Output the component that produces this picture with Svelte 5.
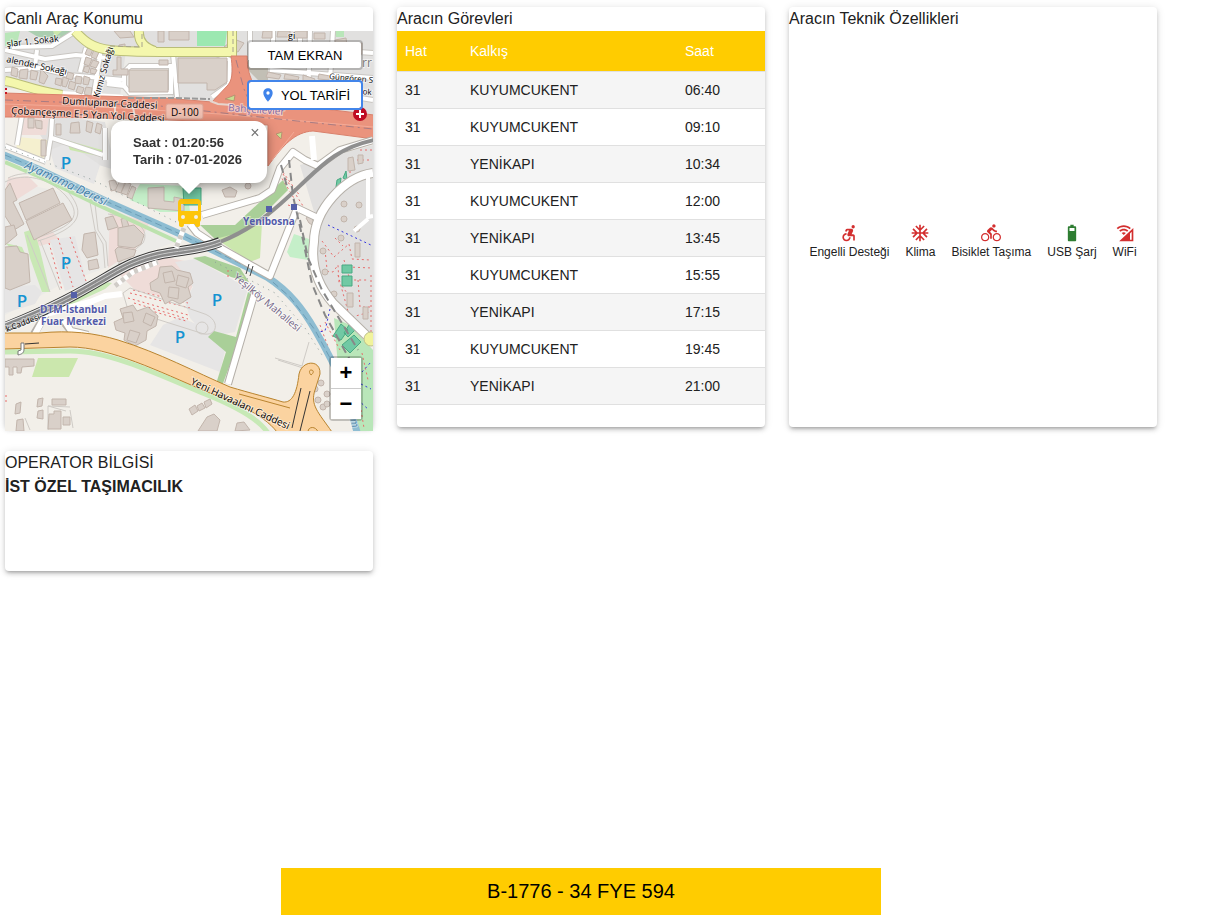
<script>
  let trips = [
    { line: "31", from: "KUYUMCUKENT", time: "06:40" },
    { line: "31", from: "KUYUMCUKENT", time: "09:10" },
    { line: "31", from: "YENİKAPI", time: "10:34" },
    { line: "31", from: "KUYUMCUKENT", time: "12:00" },
    { line: "31", from: "YENİKAPI", time: "13:45" },
    { line: "31", from: "KUYUMCUKENT", time: "15:55" },
    { line: "31", from: "YENİKAPI", time: "17:15" },
    { line: "31", from: "KUYUMCUKENT", time: "19:45" },
    { line: "31", from: "YENİKAPI", time: "21:00" },
  ];

  let features = [
    {
      label: "Engelli Desteği",
      active: false,
      path: "M17 2.54a2 2 0 1 1 0 4 2 2 0 0 1 0-4zM14 17h-2c0 1.65-1.35 3-3 3s-3-1.35-3-3 1.35-3 3-3v-2c-2.76 0-5 2.24-5 5s2.24 5 5 5 5-2.24 5-5zm3-3.5h-1.86l1.67-3.67C17.42 8.5 16.44 7 14.96 7h-5.2c-.81 0-1.54.47-1.87 1.2L7.22 10l1.92.53L9.79 9H12l-1.83 4.1c-.6 1.33.39 2.9 1.85 2.9H17v5h2v-5.5c0-1.1-.9-2-2-2z",
    },
    {
      label: "Klima",
      active: false,
      path: "M22 11h-4.17l3.24-3.24-1.41-1.42L15 11h-2V9l4.66-4.66-1.42-1.41L13 6.17V2h-2v4.17L7.76 2.93 6.34 4.34 11 9v2H9L4.34 6.34 2.93 7.76 6.17 11H2v2h4.17l-3.24 3.24 1.41 1.42L9 13h2v2l-4.66 4.66 1.42 1.41L11 17.83V22h2v-4.17l3.24 3.24 1.42-1.41L13 15v-2h2l4.66 4.66 1.41-1.42L17.83 13H22z",
    },
    {
      label: "Bisiklet Taşıma",
      active: false,
      path: "M15.5 5.5c1.1 0 2-.9 2-2s-.9-2-2-2-2 .9-2 2 .9 2 2 2zM5 12c-2.8 0-5 2.2-5 5s2.2 5 5 5 5-2.2 5-5-2.2-5-5-5zm0 8.5c-1.9 0-3.5-1.6-3.5-3.5s1.6-3.5 3.5-3.5 3.5 1.6 3.5 3.5-1.6 3.5-3.5 3.5zm5.8-10l2.4-2.4.8.8c1.3 1.3 3 2.1 5.1 2.1V9c-1.5 0-2.7-.6-3.6-1.5l-1.9-1.9c-.5-.4-1-.6-1.6-.6s-1.1.2-1.4.6L7.8 8.4c-.4.4-.6.9-.6 1.4 0 .6.2 1.1.6 1.4L11 14v5h2v-6.2l-2.2-2.3zM19 12c-2.8 0-5 2.2-5 5s2.2 5 5 5 5-2.2 5-5-2.2-5-5-5zm0 8.5c-1.9 0-3.5-1.6-3.5-3.5s1.6-3.5 3.5-3.5 3.5 1.6 3.5 3.5-1.6 3.5-3.5 3.5z",
    },
    {
      label: "USB Şarj",
      active: true,
      path: "M15.67 4H14V2h-4v2H8.33C7.6 4 7 4.6 7 5.33v15.33C7 21.4 7.6 22 8.33 22h7.33c.74 0 1.34-.6 1.34-1.33V5.33C17 4.6 16.4 4 15.67 4zM15 9.5H9V6h6z",
    },
    {
      label: "WiFi",
      active: false,
      path: "M22 22H5L22 6zM18 12.500V20h2v-9.500zM2 6C7 1.500 14 1.500 19 6L17.500 7.500C13.500 4 7.500 4 3.500 7.500zM5 9c3.500-3 7.500-3 11 0l-1.500 1.500c-2.500-2-5.500-2-8 0zM8 12c1.500-1.200 3.500-1.200 5 0L10.500 14.500z",
    },
  ];

  // closed outlines of the buildings, in map units
  let buildings = [
    "114,31 130,31 134,37 120,38",
    "158,31 164,31 164,42 158,42", "169,31 189,31 189,40 169,40",
    "88,47 93,49 90,56 85,54", "94,50 99,52 96,59 91,57", "86,57 92,59 89,66 84,64", "93,60 99,62 96,68 90,66", "85,66 90,67 88,73 83,71", "91,68 97,70 95,74 90,73",
    "12,67 18,69 17,77 11,75", "20,70 28,69 27,79 19,78", "31,70 38,72 36,80 30,79", "41,69 48,76 44,84 39,82",
    "56,78 62,79 61,86 55,84", "63,77 69,79 66,87 62,86", "68,72 74,74 72,80 66,78", "70,81 76,83 74,90 68,88", "76,76 82,77 81,84 75,83", "78,86 84,88 82,94 76,92", "84,76 90,78 88,85 83,84", "86,87 92,88 91,96 84,94",
    "117,57 121,57 121,69 128,69 128,75 113,75 113,70 117,70", "119,45 125,44 125,52 119,52", "159,60 168,60 168,65 159,65",
    "129,70 168,70 168,92 129,92", "178,58 227,58 227,82 215,90 207,90 207,83 178,83",
    "28,118 34,118 34,128 28,128", "35,120 42,121 42,129 36,128", "56,124 61,124 61,135 56,135", "71,123 79,122 80,133 70,133", "87,121 93,123 91,133 86,131", "97,123 102,125 100,134 95,132",
    "41,140 46,140 46,156 41,156",
    "148,188 164,187 164,201 174,202 174,197 184,199 184,211 148,208",
    "5,190 10,183 17,200 13,202 24,224 14,230 5,216",
    "19,203 53,188 60,203 26,220", "26,221 63,203 72,220 34,240",
    "5,227 14,225 17,235 5,245", "5,247 17,246 20,252 28,254 30,282 10,290 5,288",
    "84,234 95,232 98,255 87,258 82,250", "88,261 97,259 99,268 89,270",
    "105,218 113,216 118,227 108,230", "121,219 126,218 129,226 123,228", "118,228 134,225 144,235 141,244 134,248 118,246", "118,247 136,250 134,256 118,262 115,250",
    "109,181 115,180 119,189 111,191", "120,180 125,182 121,193 115,191", "126,182 131,184 127,195 121,193", "132,186 136,188 132,199 127,197",
    "150,283 158,278 160,267 172,266 177,270 190,273 193,283 188,287 191,297 180,304 172,300 165,304 160,293 151,290", "163,273 172,271 175,281 165,283", "178,275 189,278 186,288 176,285", "169,287 179,288 178,299 168,297",
    "114,322 123,318 120,309 133,305 137,311 148,307 158,316 156,326 147,331 146,340 135,346 124,340 125,333 116,330", "123,313 132,312 134,321 124,323", "146,313 155,317 151,326 143,322", "130,330 140,333 136,343 127,340",
    "5,359 34,359 34,366 22,367 21,373 17,373 17,367 13,367 13,375 9,375 9,367 5,367",
    "16,404 21,402 20,413 15,414", "38,399 43,398 42,406 37,407", "38,411 43,410 43,419 37,418",
    "52,399 66,399 66,405 52,405", "49,414 54,414 54,411 61,411 61,429 48,429", "63,417 70,417 70,425 63,425", "17,420 23,419 24,431 16,431",
    "189,409 195,405 198,411 192,415", "197,406 202,403 205,408 199,411", "204,402 210,399 212,404 206,408", "207,417 214,414 220,420 217,431 198,431", "237,423 244,422 250,430 235,431",
    "224,47 234,39 244,43 238,52", "263,31 272,31 272,38 262,38", "278,31 290,31 290,37 277,37", "295,31 307,31 307,38 295,38", "314,33 325,33 325,39 314,39", "335,40 346,38 347,46 336,46", "351,44 362,43 362,54 351,54",
    "268,72 281,75 279,79 266,77", "285,74 299,77 298,80 284,79", "303,75 315,79 313,83 303,81", "319,74 330,76 329,80 318,79",
    "348,158 353,157 355,170 348,171", "358,155 363,155 363,163 358,164",
    "355,243 360,243 360,257 355,257", "347,293 353,293 353,307 347,307", "363,307 368,307 368,319 363,319",
    "306,218 311,215 314,223 318,219 314,226 309,223",
    "222,190 230,187 237,191 235,197 225,197",
  ];

  let trees = [
    [344, 204], [344, 219], [341, 238], [323, 251], [325, 272], [357, 229], [359, 205], [248, 186],
    [315, 389], [321, 383], [318, 400], [327, 394], [323, 407], [314, 412], [327, 404], [334, 294],
  ];

  let parking = [[66, 163], [66, 263], [22, 301], [217, 300], [180, 337]];
</script>

<main class="page">
  <div class="grid">
    <section class="card">
      <h2>Canlı Araç Konumu</h2>
      <div class="map">
        <svg class="map__tiles" viewBox="5 31 368 400" preserveAspectRatio="xMidYMid slice" role="img" aria-label="Harita">
          <rect x="5" y="31" width="368" height="400" fill="#f2efe9" />

          <!-- land use -->
          <path fill="#e1e0df" d="M5 31H373V125L185 98 5 88zM25 112 105 122 115 170 50 150zM300 165 373 145V345L325 290 312 265 318 225z" />
          <path fill="#ecebe8" d="M5 180 100 200 180 240 60 285 5 315zM126 50 172 54V97H120z" />
          <path fill="#efdcd8" d="M8 178 28 176 38 186 16 200 5 192zM32 238 52 231 60 240 40 246zM110 212 150 222 135 250 108 268zM120 275 140 262 165 257 190 262 193 285 185 302 135 290zM22 112 50 112 46 135 20 135z" />
          <path fill="#e6e5e5" d="M50 240 75 236 87 284 65 291zM5 287 35 285 42 292 35 304 5 313zM175 262 195 259 248 288 235 332 207 337 190 318 185 302 193 287zM163 325 180 317 228 338 220 372 150 345zM50 150 68 143 100 165 94 184 55 168z" />
          <path fill="#f5f0cf" d="M18 137 48 140 44 158 16 150z" />
          <path fill="#abceb0" d="M28 31H73L66 38 38 37z" />
          <path fill="#b9e6b9" d="M5 33 20 31 17 44 5 46zM334 31H344V37H336zM334 318 350 325 373 350V431H354L340 390z" />
          <path fill="#9ce8b1" d="M197 31H227L225 46H197z" />
          <path fill="#c5efc9" d="M130 200 140 184 187 186 190 212 160 212zM287 252 294 234 312 240 308 260 290 257z" />
          <path fill="#cbe7ad" d="M215 238 262 223 260 258 250 262zM66 140 102 150 103 157 70 150zM38 358 78 358 69 377 32 377zM53 31 62 31 55 37z" />
          <path fill="#a9cf98" d="M200 225 235 225 262 200 283 180 288 190 264 214 242 232 215 239zM248 292 257 290 252 306 222 386 216 384 226 352 208 337 214 331 236 337zM193 258 205 256 240 268 249 282 231 277z" />
          <path fill="#c9e8b5" d="M5 243 22 247 26 256 20 256zM24 232 34 229 40 250 50 292 42 292 30 258zM60 310 105 289 112 283 100 281 66 299z" />
          <path fill="#b1ad9e" opacity=".65" d="M248 56 268 62V80H258L248 70z" />

          <!-- dotted scrub -->
          <g fill="none" stroke="#e76d6c" stroke-width="1" stroke-dasharray="2 3">
            <path d="M49 243 62 290M58 238 73 287M70 237 86 281M322 241 334 257 349 244 352 259 370 260M317 270 333 272 338 265 339 283M344 260 350 280 368 280M325 250 327 269M348 267 372 268M335 238 343 246M358 280 360 307 372 307M342 286 347 293M352 317 370 312M338 275 349 315M371 275V345M360 150 372 150M350 166V183M357 160H372M362 353 368 380M320 325 330 352M325 322 340 350M228 270V280M6 395V405M361 410 364 428" />
            <path d="M277 170 295 200M280 168 300 196M283 174 303 206M288 205 310 212M130 293 190 308M128 298 188 315M133 290 188 303M134 303 188 319M145 309 186 321" />
          </g>

          <path fill="none" stroke="#cfcbc6" stroke-width="1" d="M5 182C24 172 50 178 66 196 82 215 76 226 36 238M8 178C26 169 52 174 69 193 86 214 80 228 38 241M90 200A3 3 0 1 1 95 204L98 230 106 242 108 266M90 202 95 230 103 244 105 268M108 214C138 218 150 230 143 243L118 264M40 240 60 290M27 235 50 292M123 293 130 288 202 313C220 318 219 336 204 334L128 310zM202 322A6 6 0 1 1 202 334 6 6 0 1 1 202 322M275 358 302 366 309 342M278 360 303 368M48 430V406L70 407M48 406 66 411M70 410 73 428M30 430 25 418" />

          <!-- small streets -->
          <g fill="none" stroke="#c9c6c2" stroke-width="6">
            <path d="M5 50 45 59 76 55 107 58M86 48 80 72M37 50 35 66M12 47 52 46 76 31M5 70 40 68 68 75 124 80M101 49 94 93M173 54 177 97M107 80 124 85V72L130 66H171V92L130 93 124 86 107 84" />
            <path d="M207 50 230 60 229 85 212 97M250 31V60M300 31V45M273 31V45M310 31 308 103M333 31 330 80M260 45 373 53M270 70 373 78M300 88 373 100M22 115 17 145M52 119 51 136 47 160M5 146 46 162M52 138 103 155M105 160V128" />
          </g>
          <g fill="none" stroke="#fff" stroke-width="4">
            <path d="M5 50 45 59 76 55 107 58M86 48 80 72M37 50 35 66M12 47 52 46 76 31M5 70 40 68 68 75 124 80M101 49 94 93M60 93 123 97M173 54 177 97M107 80 124 85V72L130 66H171V92L130 93 124 86 107 84" />
            <path d="M207 50 230 60 229 85 212 97M250 31V60M300 31V45M273 31V45M310 31 308 103M333 31 330 80M260 45 373 53M270 70 373 78M300 88 373 100M22 115 17 145M52 119 51 136 47 160M5 146 46 162M52 138 103 155M105 160V128" />
          </g>

          <!-- buildings -->
          <g fill="#d9d0c9" stroke="#c2b5ac" stroke-width="1">
            {#each buildings as points}
              <polygon {points} />
            {/each}
            {#each trees as [x, y]}
              <circle cx={x} cy={y} r="3" />
            {/each}
          </g>
          <g fill="#71c9a4" stroke="#48a982">
            <path d="M342 265H352V273H342zM342 276H352V286H342zM343 178 346 171 347 180zM337 180 341 178 340 186 336 187zM333 336 341 324 348 330 341 340zM342 345 354 335 361 342 350 353zM349 325 355 330 348 337 344 333zM183 188 201 188 201 205 184 205z" />
          </g>

          <!-- yellow streets -->
          <g fill="none" stroke-linejoin="round">
            <path stroke="#b9bd78" stroke-width="10" d="M75 31C84 41 92 48 110 50 130 53 205 52 234 52M232 31V56M139 31C138 42 145 48 155 51M5 81C22 84 32 90 62 95" />
            <path stroke="#f4f7ad" stroke-width="8" d="M75 31C84 41 92 48 110 50 130 53 205 52 234 52M232 31V56M139 31C138 42 145 48 155 51M5 81C22 84 32 90 62 95" />
            <path stroke="#a6a38e" stroke-width="1" stroke-dasharray="5 3" d="M108 52V46L142 47V31M233 31V55" />
          </g>

          <!-- motorway -->
          <path
            fill="#ea937d"
            stroke="#d9816c"
            stroke-width="1"
            d="M4 93 165 98 212 102 228 85C234 78 232 65 231 56H247C247 80 258 95 275 103L374 115V139L313 131C295 132 283 145 268 166V125L220 122C150 119 80 117 4 117z"
          />
          <path fill="none" stroke="#f3ab98" stroke-width="1" d="M5 104 120 108 220 114 373 127M272 160 294 132" />
          <path fill="none" stroke="#a87c83" stroke-width="1" stroke-dasharray="8 4 2 4" d="M5 100 160 106 250 116 373 129M236 60 244 89 252 108" />
          <path fill="#c7df91" stroke="#b99271" d="M276 134 282 132 281 139zM225 99 235 95 234 101z" />
          <path fill="none" stroke="#e6d6cf" stroke-width="2" d="M115 101V116M132 103 135 117M210 101 218 104 232 105" />
          <path fill="none" stroke="#999" stroke-width="2" stroke-dasharray="6 2" d="M128 98H174L210 99" />

          <!-- creek -->
          <path fill="none" stroke="#bce2ad" stroke-width="4" d="M5 162 40 177 98 205 178 242" />
          <path fill="none" stroke="#8ebdd2" stroke-width="7" d="M4 155 38 169 110 203 180 234 233 260 267 277C290 292 303 309 315 330 328 352 336 368 345 390L357 432" />
          <path fill="none" stroke="#6c9db6" stroke-width="1" stroke-dasharray="7 4" d="M5 155 38 169 110 203 180 234 233 260 267 277 290 297 315 330 330 358" />
          <path fill="none" stroke="#8d9b98" stroke-width="1" stroke-dasharray="1 5" d="M5 147 93 180 180 224M215 262 275 293 305 328 322 355" />

          <!-- main white roads -->
          <g fill="none" stroke="#b5b0a9" stroke-width="8" stroke-linejoin="round">
            <path d="M190 224 197 233 217 246 270 276 297 208 322 220M202 215 260 198 272 190 280 168 293 152 305 160 318 166 340 150 373 140M228 384 255 292M34 334 46 314M64 322 71 331 88 335" />
            <path stroke-width="10" d="M373 173C345 177 314 209 314 242 311 262 315 282 333 303L367 336" />
          </g>
          <g fill="none" stroke="#fff" stroke-width="6" stroke-linejoin="round">
            <path d="M190 224 197 233 217 246 270 276 297 208 322 220M202 215 260 198 272 190 280 168 293 152 305 160 318 166 340 150 373 140M228 384 255 292M34 336 46 314 90 302 105 296 122 294M64 320 71 331 88 335M312 136 314 160" />
            <path stroke-width="8" d="M373 173C345 177 314 209 314 242 311 262 315 282 333 303L367 336" />
            <path stroke-width="4" d="M368 175V217L373 216M354 231 368 219" />
          </g>
          <circle cx="371" cy="339" r="7" fill="#f1f39c" stroke="#bfc28b" />

          <!-- railway -->
          <g fill="none">
            <path stroke="#8f8f8f" stroke-width="4" d="M374 140C341 147 325 162 305 181 283 202 260 226 220 242" />
            <path stroke="#333" stroke-width="10" d="M220 242C190 254 168 248 133 263 110 272 80 298 5 327" />
            <path stroke="#eee" stroke-width="8" d="M221 242C190 254 168 248 133 263 110 272 80 298 4 327" />
            <path stroke="#8a8a8a" stroke-width="6" d="M221 242C190 254 168 248 133 263 110 272 80 298 4 327" />
            <path stroke="#c9c9c9" stroke-width="1" d="M221 242C190 254 168 248 133 263 110 272 80 298 4 327" />
            <path stroke="#888" stroke-width="2" stroke-dasharray="8 5" d="M289 160 293 196 303 240 312 284 325 315 350 360M281 165 288 190M300 220 308 258 322 290 358 350" />
            <path stroke="#444" stroke-width="1" d="M246 274 249 264M250 276 253 266" />
            <path stroke="#3436df" stroke-width="1" stroke-dasharray="2 3" d="M328 225 373 246M330 309 325 331 318 332M362 372 371 362M361 384 371 389M358 400 369 410" />
            <path stroke="#fff" stroke-width="5" d="M115 286 133 272 158 262M184 228 176 248" />
            <path stroke="#d0ccc7" stroke-width="5" stroke-dasharray="4 4" d="M115 286 133 272 158 262M184 228 176 248" />
          </g>

          <!-- primary road -->
          <path fill="none" stroke="#c7e9b6" stroke-width="5" d="M5 352 70 351C110 351 160 375 205 394 235 406 258 418 268 433" />
          <path
            fill="#fbd3a0"
            stroke="#b9842f"
            d="M4 333H40C70 330 95 333 118 340 160 353 195 372 230 387 250 393 270 398 283 402 292 403 297 393 299 374 302 360 321 359 320 374L315 390C310 405 318 412 332 432H277C262 413 235 403 205 391 160 372 110 347 70 347L4 349z"
          />
          <path fill="none" stroke="#b9842f" d="M239 394 290 408M308 432C308 426 316 426 318 432M311 370C314 370 314 373 311 375 309 373 309 370 311 370z" />
          <path stroke="#333" d="M301 388 292 428M310 391 300 431M25 344 39 343" />
          <path stroke="#777" stroke-width="1" fill="#fff" d="M21 343 24 343V349C24 353 22 354 18 355V351L21 350z" />

          <!-- labels -->
          <g class="labels">
            <text font-size="9" transform="rotate(-6 7 47)" x="7" y="47">şlar 1. Sokak</text>
            <text font-size="9" transform="rotate(12 6 62)" x="6" y="62">alender Sokağı</text>
            <text font-size="9" transform="rotate(-74 99 98)" x="99" y="98">Kımız Sokağı</text>
            <text font-size="10" transform="rotate(3 62 104)" x="62" y="104">Dumlupınar Caddesi</text>
            <text font-size="10" transform="rotate(3 11 114)" x="11" y="114">Çobançeşme E-5 Yan Yol Caddesi</text>
            <text font-size="9" x="288" y="39">gi</text>
            <text font-size="8" transform="rotate(5 329 79)" x="329" y="79">Güngören S</text>
            <text font-size="8" transform="rotate(4 358 94)" x="358" y="94">Sok</text>
            <text font-size="12" fill="#777" x="362" y="67">rr</text>
            <text font-size="10" fill="#8068a5" transform="rotate(4 228 111)" x="228" y="111">Bahçelievler</text>
            <text font-size="12" fill="#417da7" font-style="italic" transform="rotate(25 24 168)" x="24" y="168">Ayamama Deresi</text>
            <text font-size="10" fill="#706183" transform="rotate(40 233 278)" x="233" y="278">Yeşilköy Mahallesi</text>
            <text font-size="10" transform="rotate(25 190 384)" x="190" y="384">Yeni Havaalanı Caddesi</text>
            <text font-size="8" transform="rotate(-21 7 332)" x="7" y="332">k Caddesi</text>
            <text font-size="10" fill="#417da7" font-style="italic" transform="rotate(76 349 414)" x="349" y="414">am</text>
          </g>
          <rect x="166" y="104" width="37" height="15" rx="2" fill="#f0c0b2" stroke="#dba394" />
          <g class="labels">
            <text class="plain" font-size="10" x="171" y="116">D-100</text>
            <text font-size="10" font-weight="700" fill="#535aaa" x="243" y="225">Yenibosna</text>
            <text font-size="10" font-weight="700" fill="#535aaa" x="40" y="313">DTM-İstanbul</text>
            <text font-size="10" font-weight="700" fill="#535aaa" x="41" y="325">Fuar Merkezi</text>
            {#each parking as [x, y]}
              <text class="plain" font-size="17" font-weight="600" fill="#1593d2" text-anchor="middle" {x} y={y + 6}>P</text>
            {/each}
          </g>
          <path fill="#5560a8" d="M266 206H272V212H266zM291 204H297V210H291zM71 292H77V298H71z" />
          <path fill="#c51622" d="M5 88H7V90H5zM5 92H7V94H5z" />
          <circle cx="360" cy="114" r="7" fill="#bf0c23" />
          <path stroke="#fff" stroke-width="2" d="M356 114H364M360 110V118" />

          <!-- bus marker -->
          <path
            fill="#fdc50b"
            fill-rule="evenodd"
            d="M182 199H197Q201 199 201 203V220L200 222V225Q200 227 197 227Q195 227 195 224H184Q184 227 182 227Q179 227 179 225V222L178 220V203Q178 199 182 199zM181 204V211H198V204zM183 215A2 2 0 0 0 183 219A2 2 0 0 0 183 215zM196 215A2 2 0 0 0 196 219A2 2 0 0 0 196 215z"
          />
        </svg>

        <div class="popup">
          <div>Saat : 01:20:56</div>
          <div>Tarih : 07-01-2026</div>
          <button class="popup__close" aria-label="Kapat">×</button>
        </div>

        <div class="map__actions">
          <button class="map__button">TAM EKRAN</button>
          <button class="map__button map__button--route">
            <svg width="16" height="16" viewBox="0 0 24 24" aria-hidden="true">
              <path fill="#3f83ea" d="M12 2C8.100 2 5 5.100 5 9c0 5.500 7 13 7 13s7-7.500 7-13c0-3.900-3.100-7-7-7zm0 9.500a2.500 2.500 0 1 1 0-5 2.500 2.500 0 0 1 0 5z" />
            </svg>
            YOL TARİFİ
          </button>
        </div>

        <div class="zoom">
          <button aria-label="Yakınlaştır">+</button>
          <button aria-label="Uzaklaştır">−</button>
        </div>
      </div>
    </section>

    <section class="card">
      <h2>Aracın Görevleri</h2>
      <table>
        <thead>
          <tr>
            <th>Hat</th>
            <th>Kalkış</th>
            <th>Saat</th>
          </tr>
        </thead>
        <tbody>
          {#each trips as trip}
            <tr>
              <td>{trip.line}</td>
              <td>{trip.from}</td>
              <td>{trip.time}</td>
            </tr>
          {/each}
        </tbody>
      </table>
    </section>

    <section class="card">
      <h2>Aracın Teknik Özellikleri</h2>
      <div class="features">
        {#each features as feature}
          <div class="feature" class:feature--active={feature.active}>
            <svg width="20" height="20" viewBox="0 0 24 24" aria-hidden="true">
              <path fill="currentColor" fill-rule="evenodd" d={feature.path} />
            </svg>
            <span>{feature.label}</span>
          </div>
        {/each}
      </div>
    </section>

    <section class="card card--small">
      <h2>OPERATOR BİLGİSİ</h2>
      <p class="operator">İST ÖZEL TAŞIMACILIK</p>
    </section>
  </div>

  <footer class="plate">B-1776 - 34 FYE 594</footer>
</main>

<style>
  :global(body) {
    background: #fff;
    color: #212121;
    font-family: "Liberation Sans", Arial, sans-serif;
  }
  .page {
    box-sizing: border-box;
    min-height: 100vh;
    margin-right: 48px;
    padding: 7px 5px 0;
    display: flex;
    flex-direction: column;
  }
  .grid {
    display: grid;
    grid-template-columns: repeat(3, minmax(0, 1fr));
    gap: 24px;
    margin-bottom: 24px;
  }
  .card {
    display: flex;
    flex-direction: column;
    height: 420px;
    background: #fff;
    border-radius: 4px;
    box-shadow: 0 3px 3px -2px rgba(0, 0, 0, 0.2), 0 3px 4px 0 rgba(0, 0, 0, 0.14), 0 1px 8px 0 rgba(0, 0, 0, 0.12);
  }
  .card--small {
    height: 120px;
  }
  h2,
  .operator {
    margin: 0;
    font-size: 16px;
    line-height: 24px;
    font-weight: 400;
  }
  .operator {
    font-weight: 700;
  }

  .map {
    position: relative;
    flex: 0 0 400px;
    overflow: hidden;
  }
  .map__tiles {
    display: block;
    width: 100%;
    height: 100%;
  }
  .labels {
    font-family: "Open Sans", "Noto Sans", sans-serif;
  }
  .labels text {
    stroke: rgba(255, 255, 255, 0.5);
    stroke-width: 2px;
    paint-order: stroke;
  }
  .labels .plain {
    stroke: none;
  }
  .map button {
    font-family: inherit;
    color: #000;
    background: #fff;
    cursor: pointer;
  }
  .popup {
    position: absolute;
    left: 50%;
    top: 90px;
    transform: translateX(-50%);
    box-sizing: border-box;
    width: 156px;
    padding: 13px 12px 15px 22px;
    border-radius: 12px;
    background: #fff;
    color: #333;
    font-size: 13px;
    line-height: 17px;
    font-weight: 700;
    white-space: nowrap;
    filter: drop-shadow(0 3px 6px rgba(0, 0, 0, 0.4));
  }
  .popup::after {
    content: "";
    position: absolute;
    left: 50%;
    top: 100%;
    margin-left: -11px;
    border: 11px solid transparent;
    border-top-color: #fff;
    border-bottom: 0;
  }
  .map .popup__close {
    position: absolute;
    top: 0;
    right: 0;
    width: 24px;
    height: 24px;
    padding: 0;
    border: none;
    background: none;
    color: #757575;
    font-size: 16px;
  }
  .map__actions {
    position: absolute;
    top: 9px;
    right: 10px;
    display: flex;
    flex-direction: column;
    gap: 10px;
  }
  .map__button {
    display: flex;
    align-items: center;
    justify-content: center;
    gap: 5px;
    width: 116px;
    height: 30px;
    padding: 0;
    border: 2px solid rgba(0, 0, 0, 0.2);
    border-radius: 4px;
    background-clip: padding-box !important;
    font-size: 13px;
  }
  .map__button--route {
    border-color: #4285ea;
  }
  .zoom {
    position: absolute;
    right: 10px;
    bottom: 10px;
    border: 2px solid rgba(0, 0, 0, 0.2);
    border-radius: 4px;
    background-clip: padding-box;
  }
  .zoom button {
    display: block;
    width: 30px;
    height: 30px;
    padding: 0;
    border: none;
    font-size: 22px;
    line-height: 30px;
    font-weight: 700;
  }
  .zoom button:first-child {
    box-sizing: content-box;
    border-bottom: 1px solid #ccc;
  }

  table {
    width: 100%;
    table-layout: fixed;
    border-spacing: 0;
    font-size: 14px;
    line-height: 20px;
  }
  th,
  td {
    padding: 8px;
    border-bottom: 1px solid #e0e0e0;
    text-align: left;
  }
  th {
    background: #fc0;
    color: #fff;
    font-weight: 400;
    line-height: 24px;
  }
  th:nth-child(1) {
    width: 49px;
  }
  th:nth-child(3) {
    width: 72px;
  }
  tbody tr:nth-child(odd) {
    background: #f5f5f5;
  }

  .features {
    flex: 1;
    display: flex;
    flex-wrap: wrap;
    align-items: center;
    align-content: center;
    justify-content: center;
    gap: 16px;
    padding-top: 24px;
  }
  .feature {
    display: flex;
    flex-direction: column;
    align-items: center;
    gap: 1px;
    color: #d32f2f;
  }
  .feature--active {
    color: #2e7d32;
  }
  .feature span {
    color: #212121;
    font-size: 12px;
    line-height: 16px;
  }

  .plate {
    box-sizing: border-box;
    width: 600px;
    max-width: 100%;
    margin: auto auto 0;
    padding: 8px;
    background: #fc0;
    color: #000;
    font-size: 20px;
    line-height: 31px;
    text-align: center;
  }

  @media screen and (max-width: 900px) {
    .page {
      margin-right: 0;
    }
    .grid {
      grid-template-columns: minmax(0, 1fr);
    }
  }
</style>
